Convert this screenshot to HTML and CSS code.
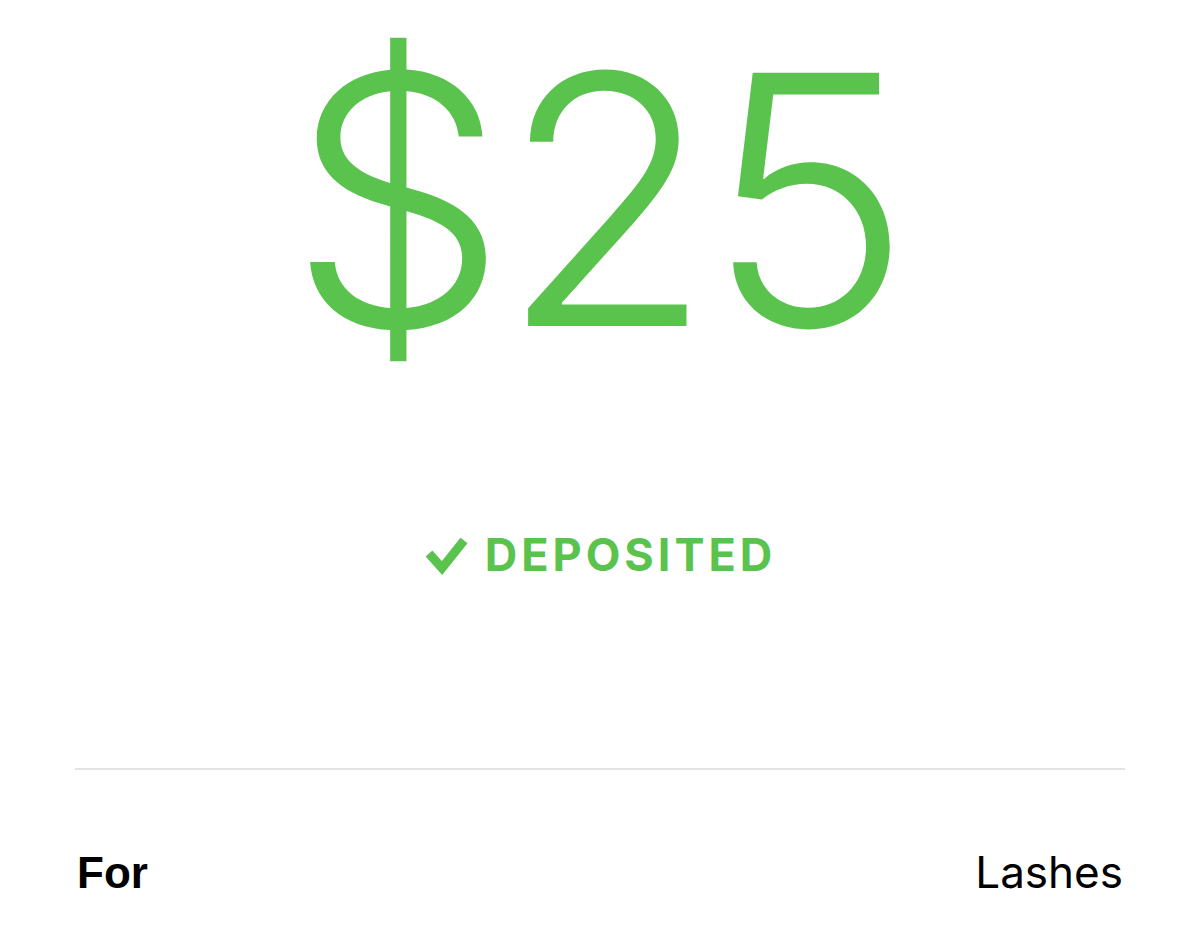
FILE: index.html
```html
<!DOCTYPE html>
<html lang="en">
<head>
  <meta charset="UTF-8">
  <meta name="viewport" content="width=device-width, initial-scale=1.0">
  <title>Payment Receipt</title>
  <link rel="stylesheet" href="styles.css">
</head>
<body>
  <div class="receipt">
    <div class="amount">$25</div>
    <div class="status">
      <svg class="status-icon" viewBox="0 0 46 42" width="46" height="42" aria-hidden="true">
        <path d="M5 20.5 L18 35 L40 7.5" fill="none" stroke="#5ac34d" stroke-width="9" stroke-linecap="butt" stroke-linejoin="miter"/>
      </svg>
      <span class="status-text">DEPOSITED</span>
    </div>
    <div class="details">
      <div class="detail-row">
        <span class="detail-label">For</span>
        <span class="detail-value">Lashes</span>
      </div>
    </div>
  </div>
</body>
</html>
```

FILE: styles.css
```css
body {
  margin: 0;
  padding: 0;
  background-color: #fff;
  font-family: Inter, "Liberation Sans", sans-serif;
}
.receipt {
  display: flex;
  flex-direction: column;
  align-items: center;
}
.amount {
  color: #5ac34d;
  font-size: 348px;
  font-weight: 260;
  line-height: 1.22;
  letter-spacing: -8px;
  margin-top: -12px;
  padding: 0 12px 0 4px;
}
.status {
  display: flex;
  align-items: center;
  gap: 15px;
  margin-top: 119px;
  color: #5ac34d;
}
.status-text {
  font-size: 45px;
  font-weight: 700;
  letter-spacing: 4px;
  line-height: 1;
}
.details {
  align-self: stretch;
  margin: 191px 75px 0;
  border-top: 2px solid #e3e3e3;
}
.detail-row {
  display: flex;
  justify-content: space-between;
  align-items: baseline;
  padding-top: 80px;
  font-size: 44px;
  line-height: 1;
  color: #000;
}
.detail-label {
  font-family: "Liberation Sans", Arial, sans-serif;
  font-weight: 700;
  padding-left: 2px;
}
.detail-value {
  font-weight: 400;
  padding-right: 2px;
}
```
